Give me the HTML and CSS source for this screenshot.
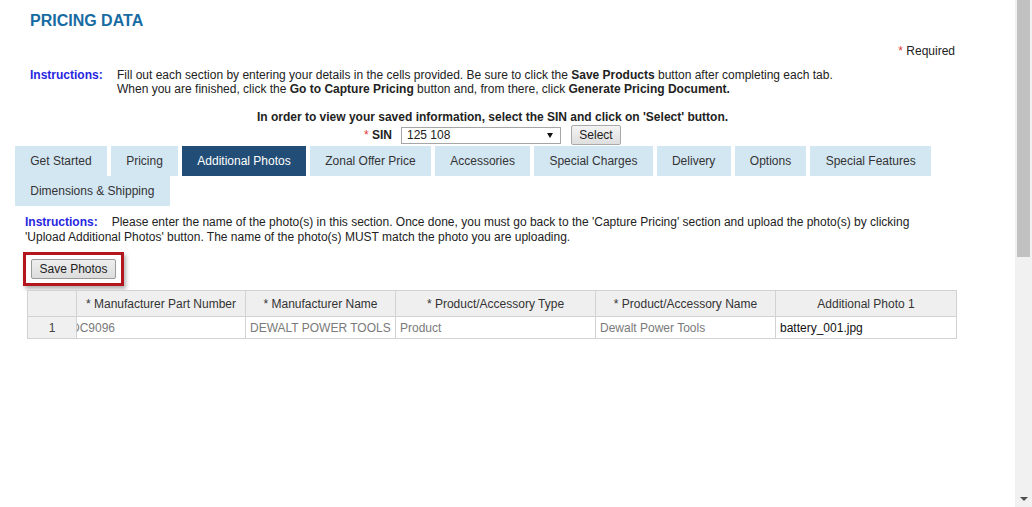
FILE: index.html
```html
<!DOCTYPE html>
<html lang="en">
<head>
<meta charset="utf-8">
<title>Pricing Data</title>
<link rel="stylesheet" href="styles.css">
</head>
<body>
<div class="window">
  <main class="page">
    <header class="head">
      <h1 class="title">PRICING DATA</h1>
      <p class="required"><span class="req">*</span> Required</p>
      <div class="instr">
        <span class="instr-label">Instructions:</span>
        <p class="instr-text">Fill out each section by entering your details in the cells provided. Be sure to click the <b>Save Products</b> button after completing each tab.<br>When you are finished, click the <b>Go to Capture Pricing</b> button and, from there, click <b>Generate Pricing Document.</b></p>
      </div>
      <p class="view-note">In order to view your saved information, select the SIN and click on 'Select' button.</p>
      <div class="sin-row">
        <span class="sin-label"><span class="req">*</span> SIN</span>
        <div class="select"><span class="select-value">125 108</span><span class="arrow"></span></div>
        <button class="btn btn-select" type="button">Select</button>
      </div>
    </header>

    <nav class="tabs">
      <span class="tab">Get Started</span>
      <span class="tab">Pricing</span>
      <span class="tab active">Additional Photos</span>
      <span class="tab">Zonal Offer Price</span>
      <span class="tab">Accessories</span>
      <span class="tab">Special Charges</span>
      <span class="tab">Delivery</span>
      <span class="tab">Options</span>
      <span class="tab">Special Features</span>
      <span class="tab">Dimensions &amp; Shipping</span>
    </nav>

    <section class="panel">
      <p class="panel-instr"><span class="panel-label">Instructions:</span>Please enter the name of the photo(s) in this section. Once done, you must go back to the 'Capture Pricing' section and upload the photo(s) by clicking 'Upload Additional Photos' button. The name of the photo(s) MUST match the photo you are uploading.</p>

      <div class="highlight"><button class="btn btn-save" type="button">Save Photos</button></div>

      <table class="grid">
        <colgroup>
          <col class="c-num"><col class="c-part"><col class="c-mfr"><col class="c-type"><col class="c-name"><col class="c-photo">
        </colgroup>
        <thead>
          <tr>
            <th class="num-head"></th>
            <th>* Manufacturer Part Number</th>
            <th>* Manufacturer Name</th>
            <th>* Product/Accessory Type</th>
            <th>* Product/Accessory Name</th>
            <th>Additional Photo 1</th>
          </tr>
        </thead>
        <tbody>
          <tr>
            <td class="num">1</td>
            <td class="muted clip"><span class="scrolled">DC9096</span></td>
            <td class="muted">DEWALT POWER TOOLS</td>
            <td class="muted">Product</td>
            <td class="muted">Dewalt Power Tools</td>
            <td class="value">battery_001.jpg</td>
          </tr>
        </tbody>
      </table>
    </section>
  </main>

  <div class="scrollbar">
    <div class="thumb"></div>
    <div class="track"></div>
    <div class="down"><span class="down-arrow"></span></div>
  </div>
</div>
</body>
</html>
```

FILE: styles.css
```css
* { box-sizing: border-box; }

html, body {
  margin: 0;
  padding: 0;
  background: #ffffff;
}

body {
  font-family: "Liberation Sans", Arial, sans-serif;
  font-size: 12px;
  line-height: 14px;
  color: #222222;
}

.window {
  display: flex;
  height: 507px;
  overflow: hidden;
}

.page {
  flex: 1;
  min-width: 0;
}

/* ---------- header ---------- */
.head {
  padding: 0 60px 0 30px;
}

.title {
  margin: 0;
  padding-top: 12px;
  font-size: 16px;
  line-height: 18px;
  font-weight: bold;
  color: #176ba3;
}

.required {
  margin: 14px 0 0;
  text-align: right;
}

.req {
  color: #e23a3a;
  font-weight: normal;
}

.instr {
  display: flex;
  margin-top: 10px;
}

.instr-label {
  flex: 0 0 87px;
  font-weight: bold;
  color: #2727e0;
}

.instr-text {
  margin: 0;
}

.view-note {
  margin: 14px 0 0;
  text-align: center;
  font-weight: bold;
}

.sin-row {
  display: flex;
  justify-content: center;
  align-items: center;
  height: 20px;
  margin-top: 1px;
}

.sin-label {
  font-weight: bold;
  margin-right: 9px;
}

.select {
  display: flex;
  align-items: center;
  justify-content: space-between;
  width: 160px;
  height: 17px;
  margin-right: 10px;
  padding: 0 7px 0 5px;
  border: 1px solid #a6a6a6;
  background: #ffffff;
  color: #222222;
}

.arrow {
  width: 0;
  height: 0;
  border-left: 3.5px solid transparent;
  border-right: 3.5px solid transparent;
  border-top: 5px solid #111111;
}

.btn {
  font-family: "Liberation Sans", Arial, sans-serif;
  font-size: 12px;
  color: #222222;
  padding: 0;
  border: 1px solid #a9a9a9;
  border-radius: 2px;
  background: linear-gradient(#f4f4f4, #dedede);
  cursor: default;
}

.btn-select {
  width: 50px;
  height: 20px;
}

/* ---------- tabs ---------- */
.tabs {
  display: flex;
  flex-wrap: wrap;
  column-gap: 4px;
  width: 955px;
  margin: 1px 0 0 15px;
}

.tab {
  height: 30px;
  line-height: 30px;
  padding: 0 15.25px;
  background: #d3e7f3;
  color: #333333;
  white-space: nowrap;
}

.tab.active {
  background: #214d76;
  color: #ffffff;
}

/* ---------- panel ---------- */
.panel {
  padding: 0 59px 0 25px;
}

.panel-instr {
  max-width: 920px;
  margin: 9px 0 0;
  line-height: 15px;
}

.panel-label {
  font-weight: bold;
  color: #2727e0;
  margin-right: 14px;
}

.highlight {
  width: fit-content;
  margin: 7px 0 0 -2px;
  padding: 4px 5px;
  border: 3px solid #b3171d;
  box-shadow: 2px 3px 4px rgba(0, 0, 0, 0.3);
}

.btn-save {
  display: block;
  width: 85px;
  height: 20px;
  border-color: #9a9a9a;
  background: linear-gradient(#eeeeee, #dddddd);
}

/* ---------- grid ---------- */
.grid {
  width: 929px;
  margin: 4px 0 0 2px;
  border-collapse: collapse;
  table-layout: fixed;
}

.c-num { width: 49px; }
.c-part { width: 169px; }
.c-mfr { width: 150px; }
.c-type { width: 200px; }
.c-name { width: 180px; }
.c-photo { width: 181px; }

.grid th,
.grid td {
  border: 1px solid #d2d2d2;
  white-space: nowrap;
  overflow: hidden;
}

.grid th {
  height: 26px;
  padding: 0 2px;
  background: #efefef;
  font-weight: normal;
  color: #333333;
  text-align: center;
}

.grid td {
  height: 22px;
  padding: 0 4px;
  text-align: left;
}

.grid td.num {
  background: #f0f0f0;
  text-align: center;
  color: #444444;
}

.grid td.muted {
  color: #7a7a7a;
}

.grid td.clip {
  padding-left: 0;
}

.scrolled {
  display: inline-block;
  margin-left: -6px;
}

.grid td.value {
  color: #111111;
}

/* ---------- scrollbar ---------- */
.scrollbar {
  flex: 0 0 17px;
  display: flex;
  flex-direction: column;
  background: #f1f1f1;
}

.thumb {
  height: 257px;
  margin: 0 2px;
  background: #c1c1c1;
}

.track {
  flex: 1;
}

.down {
  height: 17px;
  display: flex;
  align-items: center;
  justify-content: center;
}

.down-arrow {
  width: 0;
  height: 0;
  border-left: 4px solid transparent;
  border-right: 4px solid transparent;
  border-top: 4px solid #505050;
}
```
